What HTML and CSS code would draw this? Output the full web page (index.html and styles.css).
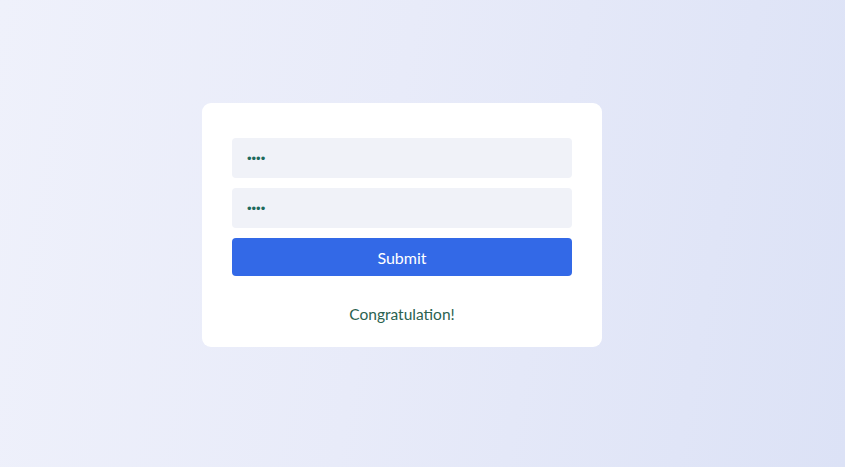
FILE: index.html
```html
<!DOCTYPE html>
<html lang="en">
<head>
<meta charset="utf-8">
<title>Login</title>
<link rel="stylesheet" href="styles.css">
</head>
<body>
<main class="page">
  <form class="card">
    <input class="field" type="password" value="abcd">
    <input class="field" type="password" value="abcd">
    <button class="submit" type="button">Submit</button>
    <p class="message">Congratulation!</p>
  </form>
</main>
</body>
</html>
```

FILE: styles.css
```css
html, body {
  margin: 0;
  padding: 0;
  height: 100%;
}
body {
  font-family: "Lato", "Open Sans", sans-serif;
  background: linear-gradient(100deg, #eff1fb 0%, #e8ebf9 45%, #dce2f6 100%);
}
.page {
  height: 467px;
  display: flex;
  justify-content: flex-start;
  align-items: flex-start;
  padding: 103px 0 0 202px;
  box-sizing: border-box;
}
.card {
  width: 400px;
  box-sizing: border-box;
  background: #ffffff;
  border-radius: 9px;
  padding: 35px 30px 21px;
  display: flex;
  flex-direction: column;
  gap: 10px;
  margin: 0;
}
.field {
  height: 40px;
  border: none;
  border-radius: 4px;
  background: #f0f2f8;
  padding: 0 15px;
  font-family: "Liberation Sans", Arial, sans-serif;
  font-size: 13px;
  color: #1d6a5c;
  outline: none;
  box-sizing: border-box;
  width: 100%;
}
.submit {
  height: 38px;
  border: none;
  border-radius: 4px;
  background: #3369e7;
  color: #ffffff;
  font-family: inherit;
  font-size: 16px;
  cursor: pointer;
  width: 100%;
}
.message {
  margin: 16px 0 0;
  text-align: center;
  color: #2b6250;
  font-size: 15.5px;
  line-height: 24px;
}
```
